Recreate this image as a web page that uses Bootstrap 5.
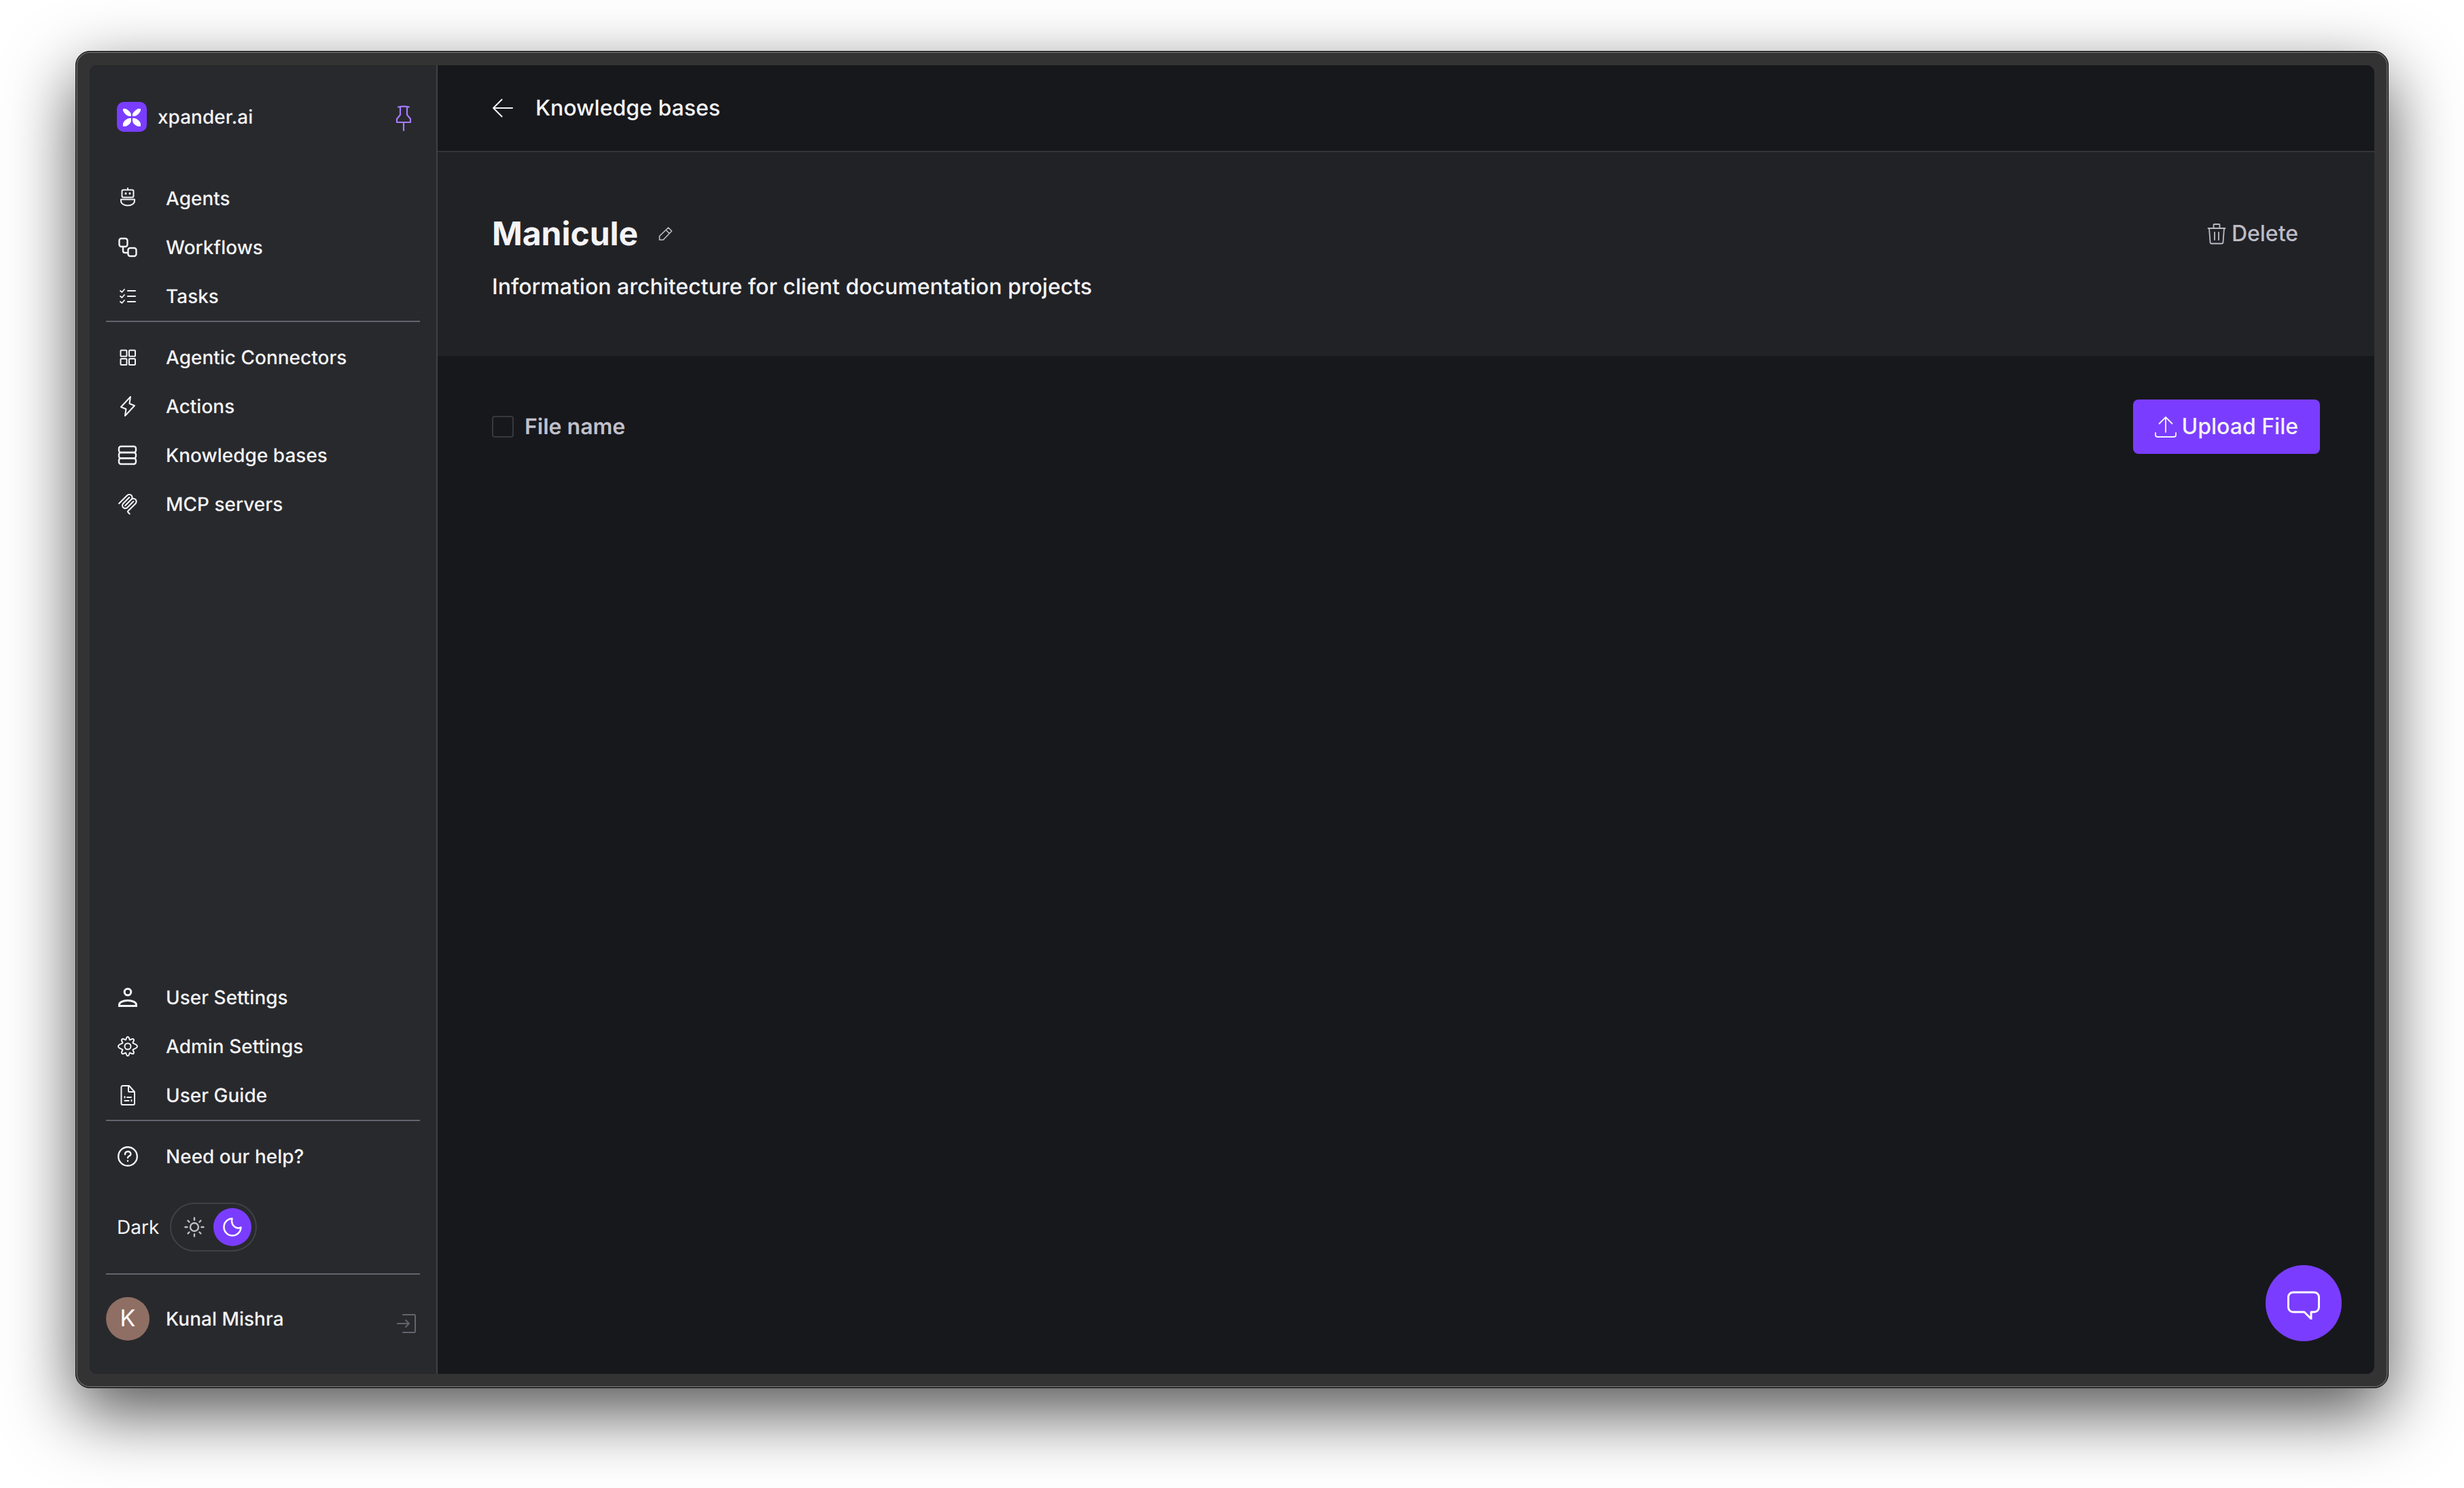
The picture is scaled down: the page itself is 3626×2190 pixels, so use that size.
<!DOCTYPE html>
<html lang="en">
<head>
<meta charset="utf-8">
<meta name="viewport" content="width=device-width, initial-scale=1">
<title>Knowledge bases – xpander.ai</title>
<link href="https://cdn.jsdelivr.net/npm/bootstrap@5.3.0/dist/css/bootstrap.min.css" rel="stylesheet">
<style>
body { font-family: Inter, "Liberation Sans", sans-serif; font-size: 28px; line-height: 40px; font-weight: 500; color: #f4f4f6; background: #fff; padding: 75px 111px 147px; text-rendering: geometricPrecision; }
svg { display: block; flex: none; fill: none; stroke: currentColor; stroke-linecap: round; stroke-linejoin: round; }
svg.solid { stroke: none; }
.app-window { border: 1px solid #000; border-radius: 21px; padding: 20px; background: #333333; box-shadow: inset 0 0 0 2px #5d5e5d, 0 36px 100px rgba(0,0,0,.68); }
.app-screen { border-radius: 11px; overflow: hidden; background: #17181c; }
.side { width: 512px; background: #28292d; border-right: 2px solid #404146; padding: 54px 24px 49px; }
.brand { padding: 0 12px 0 16px; margin-bottom: 62px; height: 44px; }
.brand-name { gap: 16px; color: inherit; }
.pin-btn { color: #a57bff; padding: 0; border: 0; background: none; }
.side .nav-link { display: flex; align-items: center; gap: 40px; height: 72px; padding: 0 16px; color: #f4f4f6; }
.rule { height: 2px; background: #62646e; margin: 0 0 16px; }
.theme-row { padding: 0 16px; margin: 32px 0; gap: 16px; font-weight: 400; }
.theme-toggle { border: 2px solid #404146; border-radius: 36px; padding: 6px; height: 72px; }
.theme-toggle button { width: 56px; height: 56px; border: 0; border-radius: 50%; background: none; color: #c1c0ca; padding: 0; }
.theme-toggle button.on { background: #7a3dff; color: #fff; }
.avatar { width: 64px; height: 64px; border-radius: 50%; background: #8f6f64; color: #fff; font-size: 34px; font-weight: 400; }
.user-row { gap: 24px; margin-top: 33px; }
.exit-btn { color: #62646e; padding: 14px 6px 0; border: 0; background: none; }
.topbar { height: 128px; border-bottom: 2px solid #34353a; padding: 0 80px; gap: 32px; font-size: 32px; }
.topbar a { color: inherit; }
.hero { background: #212226; height: 300px; padding: 80px 80px 0; font-size: 32px; line-height: 44px; }
.hero h1 { font-size: 48px; line-height: 80px; font-weight: 700; margin: 0; }
.edit-btn { color: #c1c0ca; padding: 0; border: 0; background: none; }
.act { font-size: 32px; font-weight: 500; line-height: 40px; height: 80px; padding: 0 32px; border-radius: 8px; border: 0; gap: 8px; }
.act-delete { color: #bdbcc6; }
.act-upload, .act-upload:hover { background: #7a3dff; color: #f4f4f6; }
.files { padding: 64px 80px; }
.files label { font-size: 32px; font-weight: 600; color: #c1c0ca; }
.files .form-check-input { width: 32px; height: 32px; margin: 0; background-color: transparent; border: 2px solid #38393e; border-radius: 4px; }
.chat-btn { right: 48px; bottom: 48px; width: 112px; height: 112px; border: 0; border-radius: 50%; background: #7a3dff; color: #fff; padding: 0; }
</style>
</head>
<body class="min-vh-100 d-flex flex-column">
<div class="app-window flex-grow-1 d-flex">
<div class="app-screen flex-grow-1 d-flex">
  <aside class="side d-flex flex-column flex-shrink-0">
    <div class="brand d-flex justify-content-between align-items-center">
      <a href="#" class="brand-name d-flex align-items-center text-decoration-none">
        <svg class="solid" width="44" height="44" viewBox="0 0 44 44"><rect width="44" height="44" rx="10" fill="#7a3dff"/><path fill="#fff" d="M9 10h4c4 2 7 5 8 8v3h-3c-4-1-7-4-9-8zM35 10h-4c-4 2-7 5-8 8v3h3c4-1 7-4 9-8zM9 36v-4c1-4 5-7 9-8h3v3c0 4-3 7-8 9zM35 36v-4c-1-4-5-7-9-8h-3v3c0 4 3 7 8 9z"/></svg>
        <span>xpander.ai</span>
      </a>
      <button class="pin-btn" type="button" aria-label="Pin sidebar"><svg width="24" height="44" viewBox="0 0 24 44" stroke-width="2.200"><path d="M4 7.500c5-1 11-1 16 0M7 8v11l-5 6v5h20v-5l-5-6V8M12 30v12"/></svg></button>
    </div>
    <nav class="nav flex-column flex-nowrap">
      <a class="nav-link" href="#"><svg width="32" height="32" viewBox="0 0 32 32" stroke-width="2"><rect x="7.500" y="3.500" width="17" height="11" rx="2"/><path d="M16 1v2M6 17.500h20v2c0 4-4 7-10 7s-10-3-10-7z"/><path stroke-width="3" d="M13 8.500v.5M19 8.500v.5"/></svg>Agents</a>
      <a class="nav-link" href="#"><svg width="32" height="32" viewBox="0 0 32 32" stroke-width="2.400"><rect x="3.500" y="3" width="12" height="12" rx="3"/><rect x="16.500" y="17" width="12" height="12" rx="3"/><path d="M9 15v6c0 2 1 3 3 3h4"/></svg>Workflows</a>
      <a class="nav-link" href="#"><svg width="32" height="32" viewBox="0 0 32 32" stroke-width="2.200"><path d="M16 8h11M16 16h11M16 24h11"/><path stroke-width="1.800" d="M5 8l2.500 2L11 6M5 16l2.500 2 3.500-4M5 24l2.500 2 3.500-4"/></svg>Tasks</a>
    </nav>
    <div class="rule"></div>
    <nav class="nav flex-column flex-nowrap">
      <a class="nav-link" href="#"><svg width="32" height="32" viewBox="0 0 32 32" stroke-width="2"><rect x="5.500" y="5.500" width="9" height="9" rx="1"/><rect x="18" y="5.500" width="9" height="9" rx="1"/><rect x="5.500" y="18" width="9" height="9" rx="1"/><rect x="18" y="18" width="9" height="9" rx="1"/></svg>Agentic Connectors</a>
      <a class="nav-link" href="#"><svg width="32" height="32" viewBox="0 0 32 32" stroke-width="2"><path d="M20 2L6 17l7.500 3L12 30l14-15-7.500-3z"/></svg>Actions</a>
      <a class="nav-link" href="#"><svg width="32" height="32" viewBox="0 0 32 32" stroke-width="2.400"><rect x="3" y="3" width="25" height="9" rx="3"/><rect x="3" y="12" width="25" height="8.500" rx="3"/><rect x="3" y="20.500" width="25" height="8.500" rx="3"/></svg>Knowledge bases</a>
      <a class="nav-link" href="#"><svg width="32" height="32" viewBox="0 0 180 180" stroke-width="12"><path d="M18 84.853L85.882 16.971c9.373-9.373 24.569-9.373 33.941 0 9.373 9.372 9.373 24.568 0 33.941L68.558 102.177M69.265 101.470L119.823 50.912c9.373-9.373 24.569-9.373 33.942 0l.353.353c9.373 9.373 9.373 24.569 0 33.941L92.725 146.600c-3.124 3.124-3.124 8.189 0 11.313l12.606 12.607M102.853 33.941L52.648 84.146c-9.372 9.372-9.372 24.568 0 33.941 9.373 9.372 24.569 9.372 33.941 0l50.205-50.205"/></svg>MCP servers</a>
    </nav>
    <nav class="nav flex-column flex-nowrap mt-auto">
      <a class="nav-link" href="#"><svg width="32" height="32" viewBox="0 0 32 32" stroke-width="3"><circle cx="16" cy="8" r="4.800"/><path stroke-linejoin="miter" d="M3.500 28.500v-2c0-3 5-6 12.500-6s12.500 3 12.500 6v2z"/></svg>User Settings</a>
      <a class="nav-link" href="#"><svg width="32" height="32" viewBox="0 0 32 32" stroke-width="2"><circle cx="16" cy="16" r="4.500"/><path d="M13 6.500c1-.5.500-4.500 3-4.500s2 4 3 4.500 3.500-3 5.500-1-1.500 4.500-1 5.500 6.500 2 6.500 5-6 4-6.500 5 3 3.500 1 5.500-4.500-1.500-5.500-1-.5 4.500-3 4.500-2-4-3-4.500-3.500 3-5.500 1 1.500-4.500 1-5.500S2 19 2 16s6-4 6.500-5-3-3.500-1-5.500 4.500 1.500 5.500 1z"/></svg>Admin Settings</a>
      <a class="nav-link" href="#"><svg width="32" height="32" viewBox="0 0 32 32" stroke-width="2"><path d="M18 2H8.500a2 2 0 0 0-2 2v24a2 2 0 0 0 2 2h15.500a2 2 0 0 0 2-2V11zM17 2v8a1 1 0 0 0 1 1h8M11.500 18v1.500M15 19h6M11.500 24h6M21.500 23v1.500"/></svg>User Guide</a>
    </nav>
    <div class="rule"></div>
    <nav class="nav flex-column flex-nowrap">
      <a class="nav-link" href="#"><svg width="32" height="32" viewBox="0 0 32 32" stroke-width="2.400"><circle cx="16" cy="16" r="13.800"/><path d="M12 13c0-5.500 8.500-5.500 8.500-.5 0 3-4.500 3-4.500 5.500M16 22.500v.3"/></svg>Need our help?</a>
    </nav>
    <div class="theme-row d-flex align-items-center">
      <span>Dark</span>
      <div class="theme-toggle d-flex align-items-center">
        <button type="button" aria-label="Light theme" class="d-flex align-items-center justify-content-center"><svg width="32" height="32" viewBox="0 0 32 32" stroke-width="2.400"><circle cx="16" cy="16" r="6"/><path d="M16 2.500v3M16 26.500v3M2.500 16h3M26.500 16h3M6.500 6.500L8.500 8.500M23.500 23.500l2 2M25.500 6.500l-2 2M8.500 23.500l-2 2"/></svg></button>
        <button type="button" aria-label="Dark theme" class="on d-flex align-items-center justify-content-center"><svg width="32" height="32" viewBox="0 0 32 32" stroke-width="2.500"><path d="M15.500 3.500a12.500 12.500 0 1 0 13 13c-8 3.500-15-4-13-13z"/></svg></button>
      </div>
    </div>
    <div class="rule m-0"></div>
    <div class="user-row d-flex align-items-center">
      <span class="avatar d-flex align-items-center justify-content-center">K</span>
      <span>Kunal Mishra</span>
      <button type="button" class="exit-btn ms-auto" aria-label="Log out"><svg width="28" height="28" viewBox="0 0 28 28" stroke-width="2"><path d="M9 1h17a1 1 0 0 1 1 1v24a1 1 0 0 1-1 1H9M1 14h17M13 9l5 5-5 5"/></svg></button>
    </div>
  </aside>
  <main class="flex-grow-1 position-relative">
    <header class="topbar d-flex align-items-center">
      <a href="#" aria-label="Back"><svg width="32" height="32" viewBox="0 0 32 32" stroke-width="2"><path d="M30 16H2M14.500 3.500L2 16l12.500 12.500"/></svg></a>
      <span>Knowledge bases</span>
    </header>
    <section class="hero">
      <div class="d-flex align-items-center">
        <h1>Manicule</h1>
        <button type="button" class="edit-btn ms-4" aria-label="Rename"><svg width="32" height="32" viewBox="0 0 32 32" stroke-width="1.600"><path d="M7.500 25v-5.500L20.500 7l5 5-12.500 13zM17 10.500l5 5"/></svg></button>
        <button type="button" class="btn act act-delete ms-auto d-flex align-items-center"><svg width="28" height="32" viewBox="0 0 28 32" stroke-width="1.800"><path d="M1.500 8h25M9.500 8V3a1 1 0 0 1 1-1h7a1 1 0 0 1 1 1v5M3 8l1.500 20c0 1.500 1 2.500 2 2.500h15c1 0 2-1 2-2.500L25 8M11 14v11M17 14v11"/></svg>Delete</button>
      </div>
      <p class="mb-0 mt-3">Information architecture for client documentation projects</p>
    </section>
    <section class="files d-flex align-items-center justify-content-between">
      <div class="d-flex align-items-center gap-3">
        <input class="form-check-input" type="checkbox" id="allFiles">
        <label for="allFiles">File name</label>
      </div>
      <button type="button" class="btn act act-upload d-flex align-items-center"><svg width="32" height="32" viewBox="0 0 32 32" stroke-width="1.800"><path d="M16 24V2M6.500 11.500L16 2l9.500 9.500M1 25v3a3 3 0 0 0 3 3h24a3 3 0 0 0 3-3v-3"/></svg>Upload File</button>
    </section>
    <button type="button" class="chat-btn position-absolute d-flex align-items-center justify-content-center" aria-label="Open chat"><svg width="48" height="48" viewBox="0 0 48 48" stroke-width="3"><path d="M8.500 8h31a7 7 0 0 1 7 7v15a7 7 0 0 1-7 7H35v10L25 37H8.500a7 7 0 0 1-7-7V15a7 7 0 0 1 7-7z"/></svg></button>
  </main>
</div>
</div>
<script src="https://cdn.jsdelivr.net/npm/bootstrap@5.3.0/dist/js/bootstrap.bundle.min.js"></script>
</body>
</html>
